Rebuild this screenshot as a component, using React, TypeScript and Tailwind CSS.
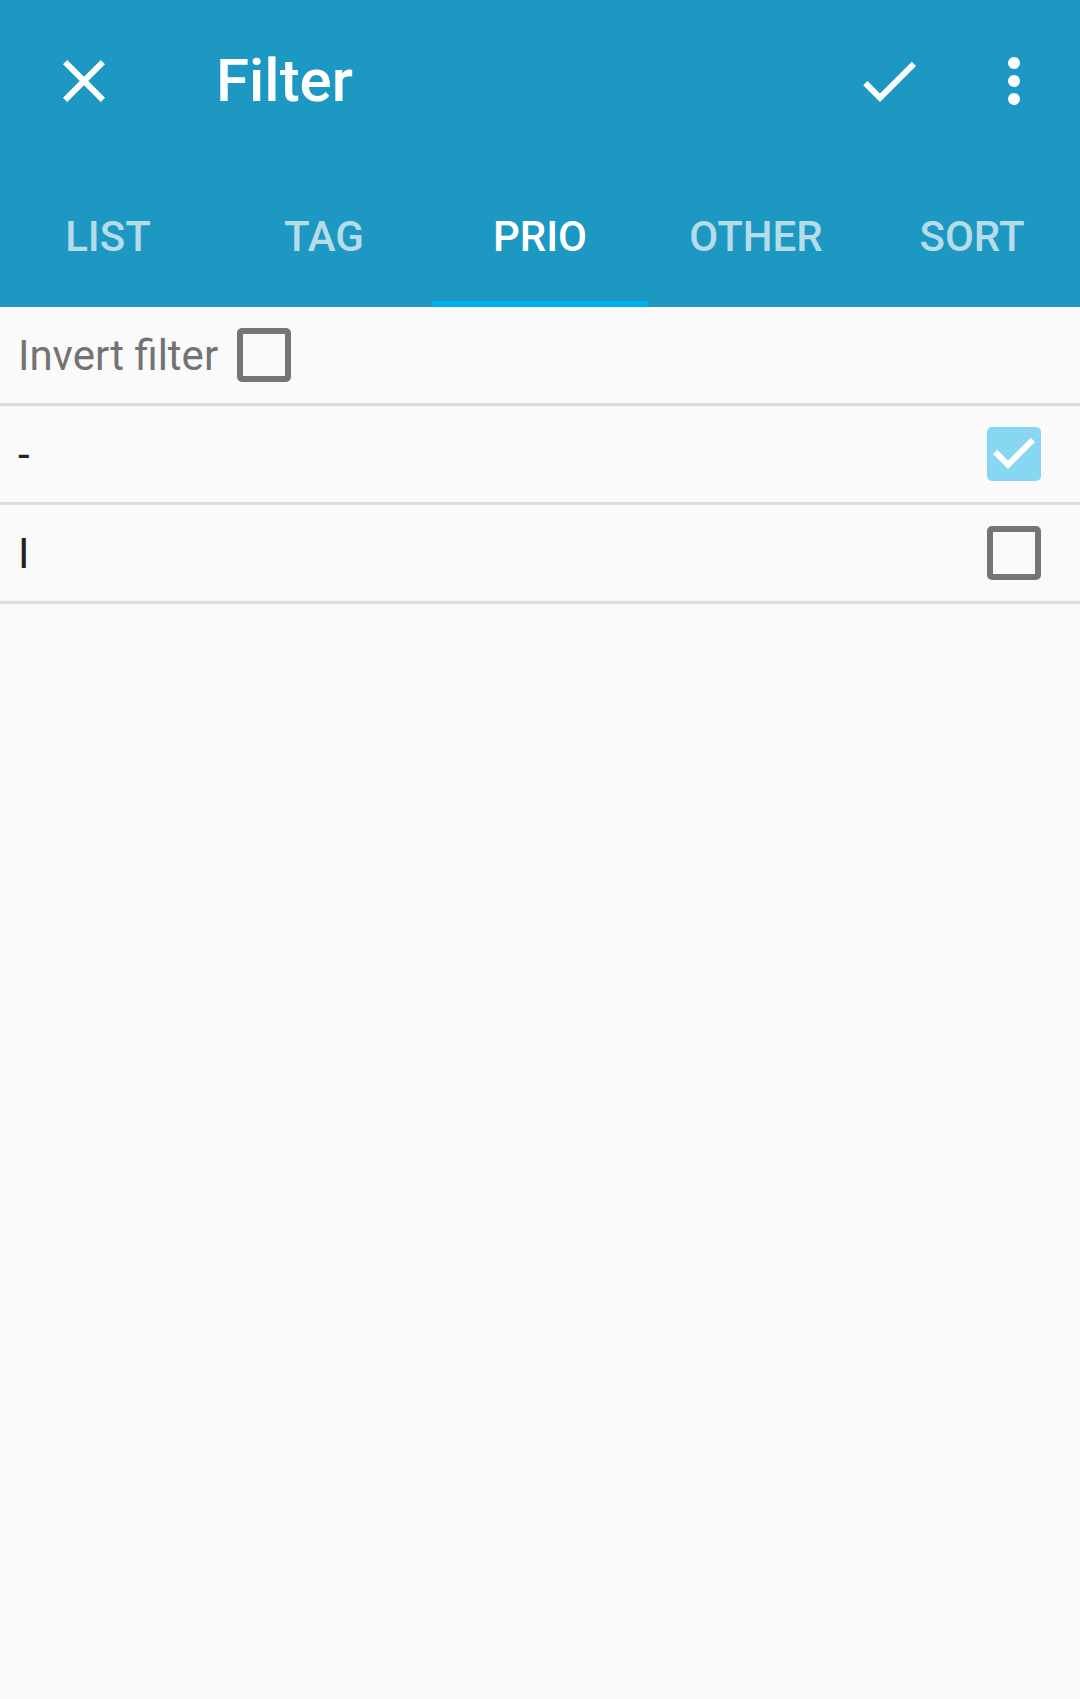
import React from "react";

function CloseIcon() {
  return (
    <svg viewBox="0 0 24 24" className="w-[72px] h-[72px]" fill="#ffffff">
      <path d="M19 6.41L17.59 5 12 10.59 6.41 5 5 6.41 10.59 12 5 17.59 6.41 19 12 13.41 17.59 19 19 17.59 13.41 12z" />
    </svg>
  );
}

function CheckIcon() {
  return (
    <svg viewBox="0 0 24 24" className="w-[72px] h-[72px]" fill="#ffffff">
      <path d="M9 16.17L4.83 12l-1.42 1.41L9 19 21 7l-1.41-1.41z" />
    </svg>
  );
}

function MoreIcon() {
  return (
    <svg viewBox="0 0 24 24" className="w-[72px] h-[72px]" fill="#ffffff">
      <circle cx="12" cy="6" r="2" />
      <circle cx="12" cy="12" r="2" />
      <circle cx="12" cy="18" r="2" />
    </svg>
  );
}

function Box({ checked }: { checked: boolean }) {
  if (checked) {
    return (
      <div className="w-[54px] h-[54px] rounded-[5px] bg-[#87d7f2] shrink-0">
        <svg viewBox="3 3 18 18" className="w-[54px] h-[54px]" fill="#ffffff">
          <path d="M10 17l-5-5 1.41-1.41L10 14.17l7.59-7.59L19 8l-9 9z" />
        </svg>
      </div>
    );
  }
  return (
    <div className="w-[54px] h-[54px] rounded-[5px] border-[6px] border-[#757575] box-border shrink-0" />
  );
}

export default function App() {
  const tabs = ["LIST", "TAG", "PRIO", "OTHER", "SORT"];
  const active = 2;
  return (
    <div className="min-h-screen w-full bg-[#fafafa] font-['Roboto',sans-serif]">
      <header className="bg-[#1c98c3]">
        <div className="h-[162px] flex items-center">
          <div className="ml-[48px] w-[72px] h-[72px]">
            <CloseIcon />
          </div>
          <h1 className="ml-[96px] text-[60px] font-medium leading-none text-white">Filter</h1>
          <div className="ml-auto mr-[30px] flex items-center gap-[53px]">
            <CheckIcon />
            <MoreIcon />
          </div>
        </div>
        <nav className="h-[145px] grid grid-cols-5">
          {tabs.map((t, i) => (
            <div key={t} className="flex flex-col">
              <div
                className={
                  "flex-1 pt-[10px] flex items-center justify-center text-[42px] font-medium leading-none " +
                  (i === active ? "text-white" : "text-[#b6dcea]")
                }
              >
                {t}
              </div>
              <div className={"h-[6px] " + (i === active ? "bg-[#00b0ec]" : "bg-transparent")} />
            </div>
          ))}
        </nav>
      </header>
      <main>
        <div className="h-[99px] border-b-[3px] border-[#dddddd] flex items-center pl-[18px] pt-[2px]">
          <span className="text-[42px] leading-none text-[#737373]">Invert filter</span>
          <div className="ml-[19px] -mt-[2px]">
            <Box checked={false} />
          </div>
        </div>
        <div className="h-[99px] border-b-[3px] border-[#dddddd] flex items-center justify-between pl-[18px] pr-[39px]">
          <span className="text-[42px] leading-none text-[#212121] pt-[2px]">-</span>
          <Box checked={true} />
        </div>
        <div className="h-[99px] border-b-[3px] border-[#dddddd] flex items-center justify-between pl-[18px] pr-[39px]">
          <span className="text-[42px] leading-none text-[#212121] pt-[2px]">I</span>
          <Box checked={false} />
        </div>
      </main>
    </div>
  );
}
